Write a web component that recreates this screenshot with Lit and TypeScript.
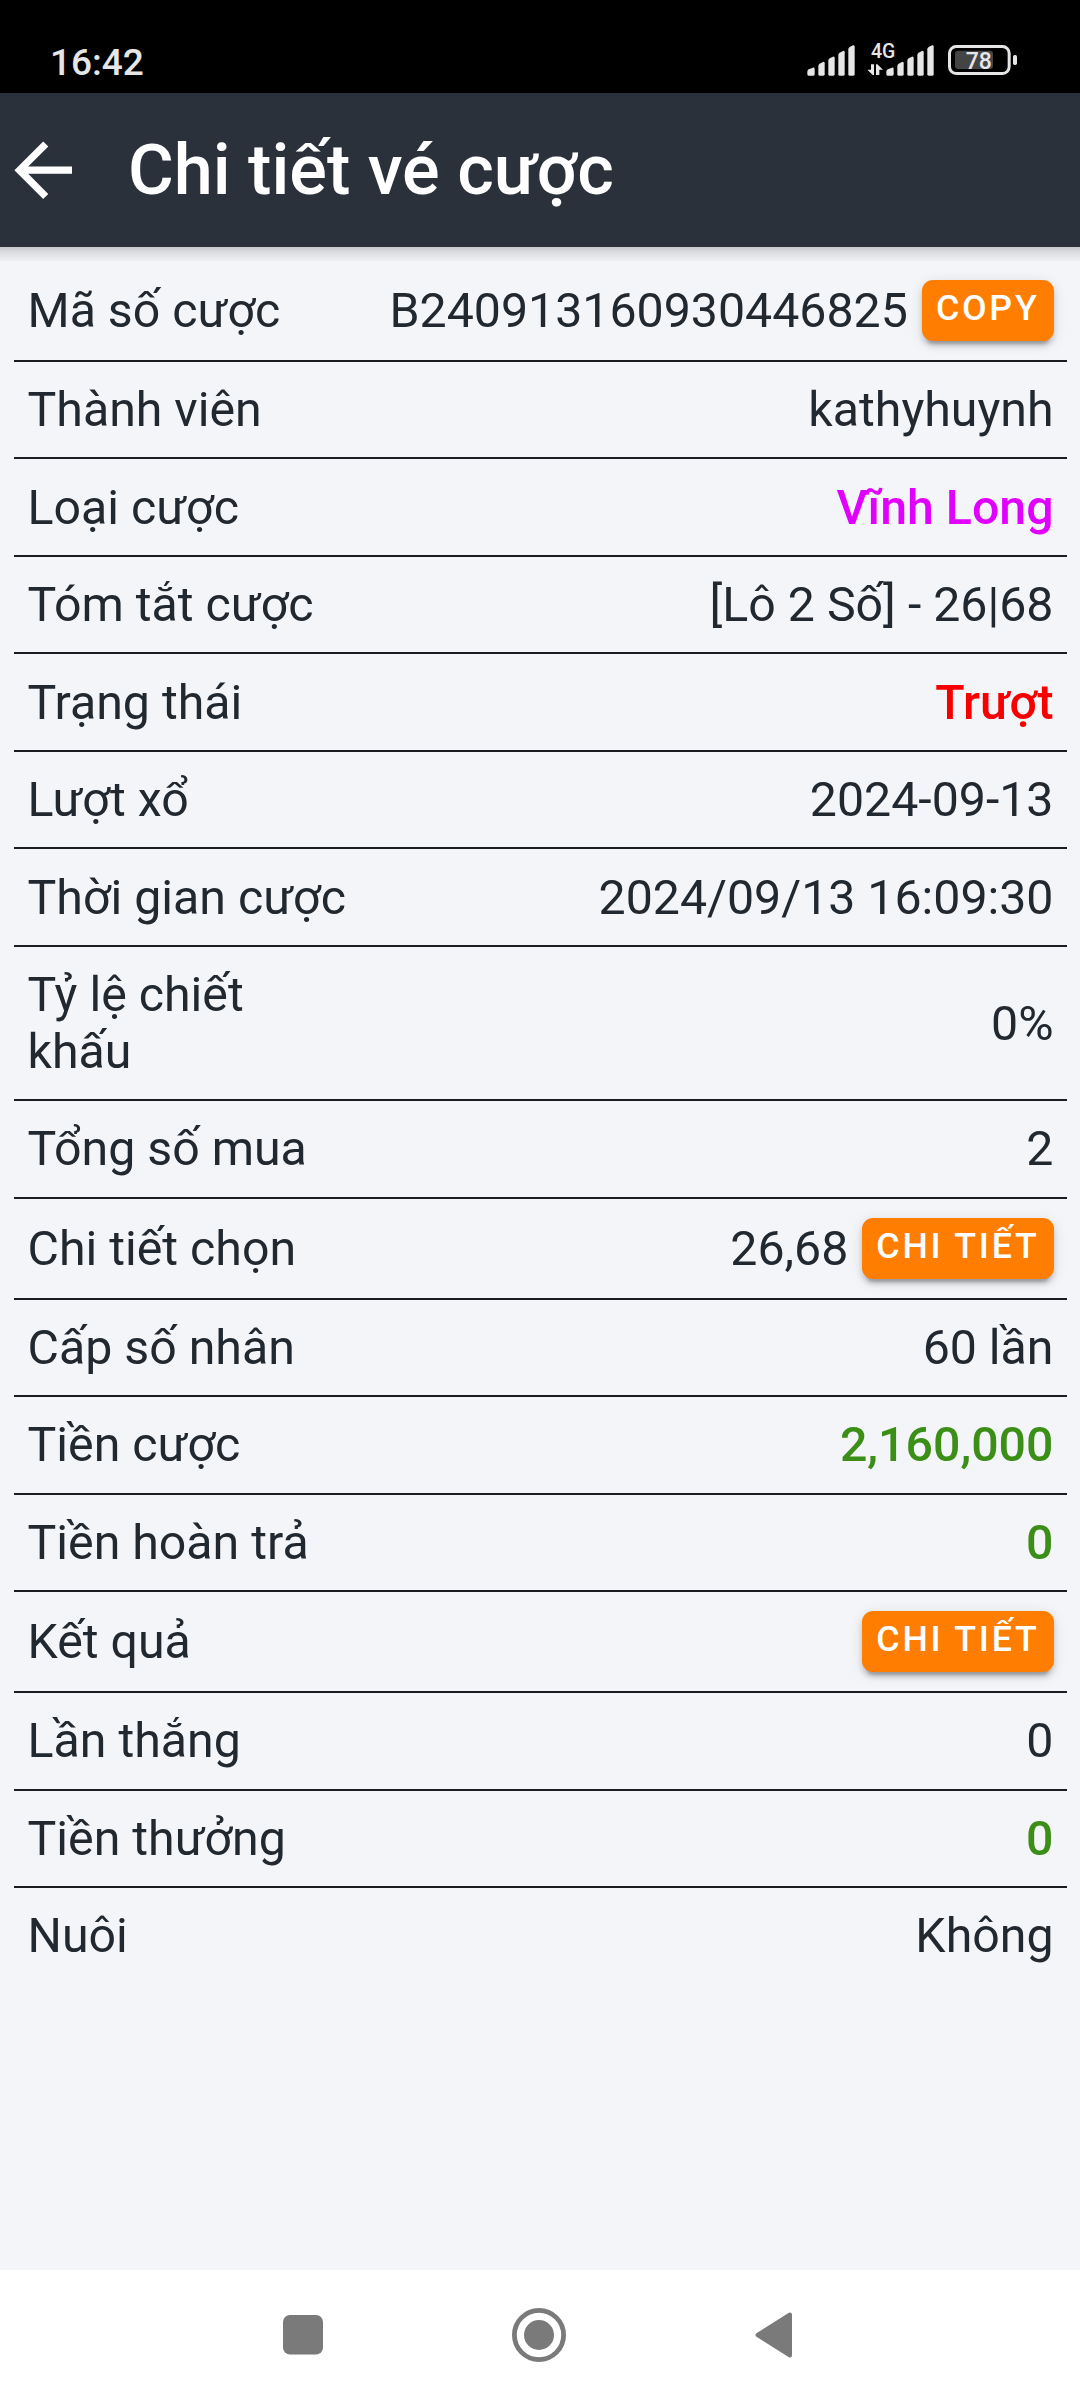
import { LitElement, html, svg, css, nothing } from "lit";
import { customElement, property } from "lit/decorators.js";
import { classMap } from "lit/directives/class-map.js";

interface Row {
  label: string;
  value?: string;
  tone?: "magenta" | "red" | "green";
  action?: string;
}

const ROWS: Row[] = [
  { label: "Mã số cược", value: "B240913160930446825", action: "COPY" },
  { label: "Thành viên", value: "kathyhuynh" },
  { label: "Loại cược", value: "Vĩnh Long", tone: "magenta" },
  { label: "Tóm tắt cược", value: "[Lô 2 Số] - 26|68" },
  { label: "Trạng thái", value: "Trượt", tone: "red" },
  { label: "Lượt xổ", value: "2024-09-13" },
  { label: "Thời gian cược", value: "2024/09/13 16:09:30" },
  { label: "Tỷ lệ chiết khấu", value: "0%" },
  { label: "Tổng số mua", value: "2" },
  { label: "Chi tiết chọn", value: "26,68", action: "CHI TIẾT" },
  { label: "Cấp số nhân", value: "60 lần" },
  { label: "Tiền cược", value: "2,160,000", tone: "green" },
  { label: "Tiền hoàn trả", value: "0", tone: "green" },
  { label: "Kết quả", action: "CHI TIẾT" },
  { label: "Lần thắng", value: "0" },
  { label: "Tiền thưởng", value: "0", tone: "green" },
  { label: "Nuôi", value: "Không" },
];

@customElement("status-bar")
export class StatusBar extends LitElement {
  static styles = css`
    :host {
      display: flex;
      justify-content: space-between;
      height: 93px;
      background: #000;
      color: #e6e6e6;
      font-family: Roboto, sans-serif;
    }
    .time {
      padding: 41px 0 0 50px;
      font-size: 37px;
      line-height: 44px;
      font-weight: 500;
    }
    .icons {
      display: block;
      margin: 30px 40px 0 0;
      width: 260px;
      height: 63px;
      fill: #e6e6e6;
    }
    .network {
      font: 500 60px Roboto, sans-serif;
    }
    .level {
      font: 500 69px Roboto, sans-serif;
    }
    .outline {
      fill: none;
      stroke: #e6e6e6;
      stroke-width: 9;
    }
    .charge {
      fill: #444;
    }
  `;

  private bars(x: number) {
    const tops = [112, 95, 79, 62, 45];
    return tops.map((top, i) => {
      const w = i === 0 ? 22 : 19;
      const left = i === 0 ? x : x + 33 + (i - 1) * 30;
      return svg`<path d="M${left} ${top + 13}Q${left} ${top + 9} ${left + 4} ${top + 6}L${left + w - 5} ${top + 1}Q${left + w} ${top - 1} ${left + w} ${top + 5}V133Q${left + w} 137 ${left + w - 4} 137H${left + 4}Q${left} 137 ${left} 133Z"></path>`;
    });
  }

  render() {
    return html`
      <div class="time">16:42</div>
      <svg class="icons" viewBox="0 0 780 189">
        ${this.bars(82)} ${this.bars(319)}
        <text class="network" x="273" y="84" textLength="73" lengthAdjust="spacingAndGlyphs">4G</text>
        <path d="M273 103h9v32h-4l-16-16h11zM288 135v-32h4l17 16h-11v16z"></path>
        <rect class="outline" x="508.500" y="49.500" width="179" height="81" rx="20"></rect>
        <rect class="charge" x="525" y="62" width="114" height="55" rx="9"></rect>
        <rect x="699" y="75" width="12" height="30" rx="5"></rect>
        <text class="level" x="557" y="117">78</text>
      </svg>
    `;
  }
}

@customElement("page-header")
export class PageHeader extends LitElement {
  @property() heading = "";

  static styles = css`
    :host {
      display: flex;
      align-items: center;
      height: 154px;
      background: #2b313b;
      color: #fff;
      font-family: Roboto, sans-serif;
    }
    .back {
      flex: none;
      width: 86.400px;
      height: 86.400px;
      fill: #fff;
    }
    .title {
      margin: 0 0 0 41.500px;
      font-size: 70.200px;
      line-height: 80px;
      font-weight: 500;
    }
  `;

  render() {
    return html`
      <svg class="back" viewBox="0 0 24 24">
        <path d="M20 11H7.830l5.590-5.590L12 4l-8 8 8 8 1.410-1.410L7.830 13H20v-2z"></path>
      </svg>
      <h1 class="title">${this.heading}</h1>
    `;
  }
}

@customElement("ticket-row")
export class TicketRow extends LitElement {
  @property({ attribute: false }) row!: Row;

  static styles = css`
    :host {
      display: flex;
      align-items: center;
      border-bottom: 2px solid #1b1b22;
      padding: 0 13.500px;
      color: #212830;
      font: 400 48.280px/56.800px Roboto, sans-serif;
    }
    :host(:last-of-type) {
      border-bottom: none;
    }
    .label {
      flex: none;
      width: 325px;
      padding: 20.300px 0 18.400px;
    }
    .value {
      flex: 1;
      display: flex;
      justify-content: flex-end;
      align-items: center;
      gap: 14px;
      white-space: nowrap;
    }
    .text {
      padding-top: 2px;
    }
    .with-action {
      padding: 19px 0;
    }
    .magenta {
      color: #e100ff;
      font-weight: 500;
    }
    .red {
      color: #f90000;
      font-weight: 500;
    }
    .green {
      color: #3b8f17;
      font-weight: 500;
    }
    .action {
      box-sizing: border-box;
      height: 61px;
      margin: 0;
      padding: 0 14px 4px;
      border: 0;
      border-radius: 11px;
      background: #ff7d00;
      color: #fff;
      font: 500 35.750px/57px Roboto, sans-serif;
      letter-spacing: 2.750px;
      box-shadow: 0 8px 3px -5px rgba(0, 0, 0, 0.2), 0 5px 5px rgba(0, 0, 0, 0.14),
        0 3px 14px rgba(0, 0, 0, 0.12);
    }
  `;

  render() {
    const { label, value, tone, action } = this.row;
    return html`
      <div class="label">${label}</div>
      <div class=${classMap({ value: true, "with-action": !!action })}>
        ${value ? html`<span class="text ${tone ?? ""}">${value}</span>` : nothing}
        ${action ? html`<button class="action">${action}</button>` : nothing}
      </div>
    `;
  }
}

@customElement("nav-bar")
export class NavBar extends LitElement {
  static styles = css`
    :host {
      display: flex;
      align-items: center;
      gap: 176px;
      height: 130px;
      padding-left: 273px;
      background: #fff;
    }
    .icon {
      width: 60px;
      height: 60px;
      fill: #7a7a7a;
      stroke: #7a7a7a;
      stroke-width: 0;
    }
    .ring {
      fill: none;
      stroke-width: 4.800px;
    }
    .arrow {
      stroke-width: 4px;
      stroke-linejoin: round;
    }
  `;

  render() {
    return html`
      <svg class="icon" viewBox="0 0 60 60"><rect x="10" y="10" width="40" height="39.500" rx="7"></rect></svg>
      <svg class="icon" viewBox="0 0 60 60">
        <circle class="ring" cx="30" cy="30" r="24.600"></circle>
        <circle cx="30" cy="30" r="15"></circle>
      </svg>
      <svg class="icon" viewBox="0 0 60 60"><path class="arrow" d="M12.500 30L45 9.500V50.500Z"></path></svg>
    `;
  }
}

@customElement("app-root")
export class AppRoot extends LitElement {
  static styles = css`
    :host {
      display: flex;
      flex-direction: column;
      height: 2400px;
      overflow: hidden;
      background: #f4f5f9;
    }
    .content {
      flex: 1;
      display: flex;
      flex-direction: column;
    }
    .shade {
      flex: none;
      height: 13.900px;
      background: linear-gradient(#c6c8cb, #dcdee1 40%, #eff0f4);
    }
    .rows {
      display: flex;
      flex-direction: column;
      padding: 0 13px 0 14px;
    }
  `;

  render() {
    return html`
      <status-bar></status-bar>
      <page-header heading="Chi tiết vé cược"></page-header>
      <main class="content">
        <div class="shade"></div>
        <div class="rows">${ROWS.map((row) => html`<ticket-row .row=${row}></ticket-row>`)}</div>
      </main>
      <nav-bar></nav-bar>
    `;
  }
}
